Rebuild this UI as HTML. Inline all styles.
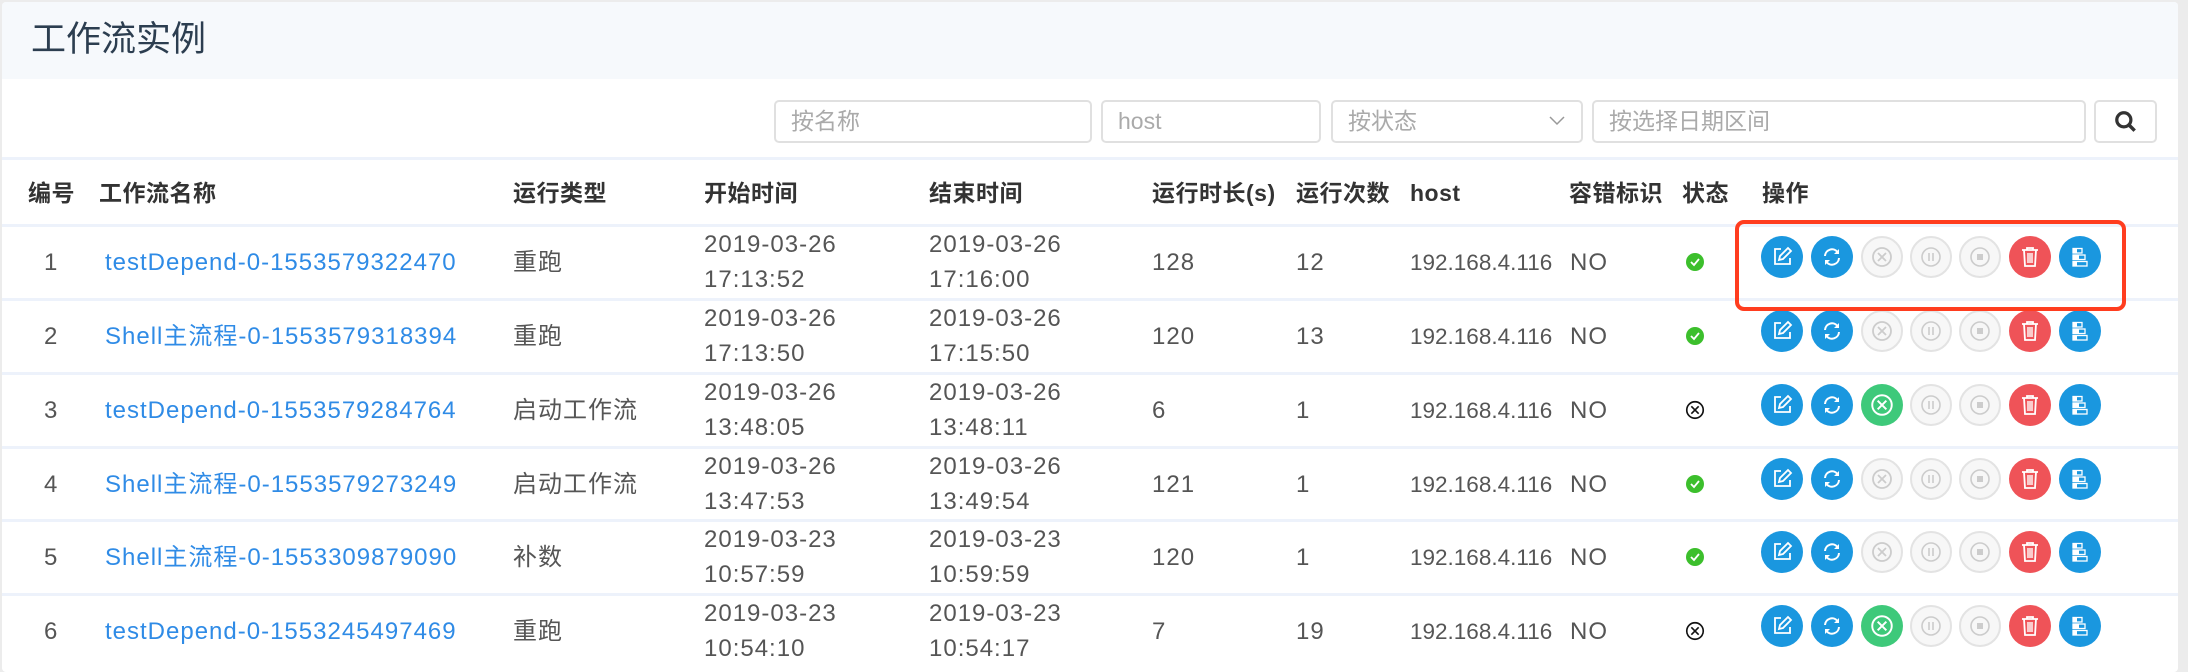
<!DOCTYPE html>
<html><head><meta charset="utf-8">
<style>
*{box-sizing:border-box;margin:0;padding:0}
body{width:2188px;height:662px;background:#ececec;overflow:hidden;font-family:"Liberation Sans","Noto Sans CJK SC",sans-serif;color:#555;font-size:24px;position:relative}
#panel{position:absolute;left:2px;top:2px;width:2176px;height:670px;background:#fff;border-radius:4px;overflow:hidden}
#hd{position:absolute;left:0;top:0;width:100%;height:77px;background:#f6f9fc}
#hd h1{position:absolute;left:29px;top:16px;font-size:35px;font-weight:normal;color:#2c3e50;line-height:44px}
.inp{position:absolute;top:98px;height:43px;border:2px solid #e0e0e0;border-radius:5px;background:#fff;color:#aaa;font-size:23px;line-height:39px;padding-left:15px}
.line{position:absolute;left:0;width:100%;height:3px;background:#edf2fb}
.c{position:absolute;white-space:nowrap;line-height:30px;letter-spacing:1px}
.th{color:#333;font-weight:bold;top:176px;font-size:23px;letter-spacing:0.5px}
.a{color:#2f8be6}
.ip{font-size:22.5px;letter-spacing:0}
.btn{position:absolute;width:42px;height:42px;border-radius:50%;display:flex;align-items:center;justify-content:center}
.b{background:#1a97df}.r{background:#ef5358}.g{background:#3ec97a}
.d{background:#f7f7f7;border:2px solid #e3e3e3}
.s{top:22px}.t1{top:4px}.t2{top:39px}
</style></head><body>
<svg width="0" height="0" style="position:absolute">
<defs>
<symbol id="edit" viewBox="0 0 24 24"><path d="M11 4H5v15h15v-6" fill="none" stroke="#fff" stroke-width="1.8"/><path d="M9 15l1-4 8-8 3 3-8 8z" fill="none" stroke="#fff" stroke-width="1.8"/></symbol>
<symbol id="ref" viewBox="0 0 24 24"><path d="M5 11a7 7 0 0 1 12.5-4M19 13a7 7 0 0 1-12.5 4" fill="none" stroke="#fff" stroke-width="2"/><path d="M19 4v5h-5zM5 20v-5h5z" fill="#fff"/></symbol>
<symbol id="x" viewBox="0 0 24 24"><circle cx="12" cy="12" r="9" fill="none" stroke="currentColor" stroke-width="1.8"/><path d="M8 8l8 8M16 8l-8 8" stroke="currentColor" stroke-width="1.8"/></symbol>
<symbol id="pause" viewBox="0 0 24 24"><circle cx="12" cy="12" r="9" fill="none" stroke="#ccc" stroke-width="1.6"/><path d="M10 8v8M14 8v8" stroke="#ccc" stroke-width="1.6"/></symbol>
<symbol id="stop" viewBox="0 0 24 24"><circle cx="12" cy="12" r="9" fill="none" stroke="#ccc" stroke-width="1.6"/><rect x="9" y="9" width="6" height="6" fill="#ccc"/></symbol>
<symbol id="trash" viewBox="0 0 24 24"><path d="M4 5h16M9 5V3h6v2M6 5l1 16h10l1-16" fill="none" stroke="#fff" stroke-width="1.8"/><path d="M10 8v10M12 8v10M14 8v10" stroke="#fff" stroke-width="1.4"/></symbol>
<symbol id="gantt" viewBox="0 0 24 24"><rect x="5" y="3.5" width="9" height="4.5" fill="none" stroke="#fff" stroke-width="1.3"/><rect x="5" y="10" width="12" height="4.5" fill="none" stroke="#fff" stroke-width="1.3"/><rect x="5" y="16.5" width="14" height="4.5" fill="none" stroke="#fff" stroke-width="1.3"/><rect x="5" y="3.5" width="4" height="4.5" fill="#fff"/><rect x="5" y="10" width="6" height="4.5" fill="#fff"/><rect x="5" y="16.5" width="4" height="4.5" fill="#fff"/></symbol>
<symbol id="ok" viewBox="0 0 20 20"><circle cx="10" cy="10" r="9" fill="#3cbf2c"/><path d="M6 10l3 3 5-6" fill="none" stroke="#fff" stroke-width="1.8"/></symbol>
</defs></svg>
<div id="panel">
<div id="hd"><h1>工作流实例</h1></div>
<div class="inp" style="left:772px;width:318px">按名称</div>
<div class="inp" style="left:1099px;width:220px">host</div>
<div class="inp" style="left:1329px;width:252px">按状态<svg style="position:absolute;right:16px;top:14px" width="16" height="10" viewBox="0 0 16 10"><path d="M1 1l7 7 7-7" fill="none" stroke="#999" stroke-width="1.5"/></svg></div>
<div class="inp" style="left:1590px;width:494px">按选择日期区间</div>
<div class="inp" style="left:2092px;width:63px;padding:0"><svg width="26" height="26" viewBox="0 0 24 24" style="position:absolute;left:17px;top:7px"><circle cx="10" cy="10" r="6.5" fill="none" stroke="#333" stroke-width="3"/><path d="M15 15l5 5" stroke="#333" stroke-width="3.2"/></svg></div>
<div class="line" style="top:155px"></div>
<div class="c th" style="left:26px">编号</div>
<div class="c th" style="left:97px">工作流名称</div>
<div class="c th" style="left:511px">运行类型</div>
<div class="c th" style="left:702px">开始时间</div>
<div class="c th" style="left:927px">结束时间</div>
<div class="c th" style="left:1150px">运行时长(s)</div>
<div class="c th" style="left:1294px">运行次数</div>
<div class="c th" style="left:1408px">host</div>
<div class="c th" style="left:1567px">容错标识</div>
<div class="c th" style="left:1680px">状态</div>
<div class="c th" style="left:1760px">操作</div>

<div class="line" style="top:222px"></div>
<div class="line" style="top:296px"></div>
<div class="line" style="top:370px"></div>
<div class="line" style="top:444px"></div>
<div class="line" style="top:517px"></div>
<div class="line" style="top:591px"></div>

<div style="position:absolute;left:0;top:224px;width:100%;height:74px">
<div class="c s" style="left:42px">1</div>
<div class="c a s" style="left:103px">testDepend-0-1553579322470</div>
<div class="c s" style="left:511px">重跑</div>
<div class="c t1" style="left:702px">2019-03-26</div><div class="c t2" style="left:702px">17:13:52</div>
<div class="c t1" style="left:927px">2019-03-26</div><div class="c t2" style="left:927px">17:16:00</div>
<div class="c s" style="left:1150px">128</div>
<div class="c s" style="left:1294px">12</div>
<div class="c s ip" style="left:1408px">192.168.4.116</div>
<div class="c s" style="left:1568px">NO</div>
<svg class="c" style="left:1683px;top:26px" width="20" height="20"><use href="#ok"/></svg>
</div>

<div style="position:absolute;left:0;top:298px;width:100%;height:74px">
<div class="c s" style="left:42px">2</div>
<div class="c a s" style="left:103px">Shell主流程-0-1553579318394</div>
<div class="c s" style="left:511px">重跑</div>
<div class="c t1" style="left:702px">2019-03-26</div><div class="c t2" style="left:702px">17:13:50</div>
<div class="c t1" style="left:927px">2019-03-26</div><div class="c t2" style="left:927px">17:15:50</div>
<div class="c s" style="left:1150px">120</div>
<div class="c s" style="left:1294px">13</div>
<div class="c s ip" style="left:1408px">192.168.4.116</div>
<div class="c s" style="left:1568px">NO</div>
<svg class="c" style="left:1683px;top:26px" width="20" height="20"><use href="#ok"/></svg>
</div>

<div style="position:absolute;left:0;top:372px;width:100%;height:74px">
<div class="c s" style="left:42px">3</div>
<div class="c a s" style="left:103px">testDepend-0-1553579284764</div>
<div class="c s" style="left:511px">启动工作流</div>
<div class="c t1" style="left:702px">2019-03-26</div><div class="c t2" style="left:702px">13:48:05</div>
<div class="c t1" style="left:927px">2019-03-26</div><div class="c t2" style="left:927px">13:48:11</div>
<div class="c s" style="left:1150px">6</div>
<div class="c s" style="left:1294px">1</div>
<div class="c s ip" style="left:1408px">192.168.4.116</div>
<div class="c s" style="left:1568px">NO</div>
<svg class="c" style="left:1682px;top:25px;color:#111" width="22" height="22"><use href="#x"/></svg>
</div>

<div style="position:absolute;left:0;top:446px;width:100%;height:74px">
<div class="c s" style="left:42px">4</div>
<div class="c a s" style="left:103px">Shell主流程-0-1553579273249</div>
<div class="c s" style="left:511px">启动工作流</div>
<div class="c t1" style="left:702px">2019-03-26</div><div class="c t2" style="left:702px">13:47:53</div>
<div class="c t1" style="left:927px">2019-03-26</div><div class="c t2" style="left:927px">13:49:54</div>
<div class="c s" style="left:1150px">121</div>
<div class="c s" style="left:1294px">1</div>
<div class="c s ip" style="left:1408px">192.168.4.116</div>
<div class="c s" style="left:1568px">NO</div>
<svg class="c" style="left:1683px;top:26px" width="20" height="20"><use href="#ok"/></svg>
</div>

<div style="position:absolute;left:0;top:519px;width:100%;height:74px">
<div class="c s" style="left:42px">5</div>
<div class="c a s" style="left:103px">Shell主流程-0-1553309879090</div>
<div class="c s" style="left:511px">补数</div>
<div class="c t1" style="left:702px">2019-03-23</div><div class="c t2" style="left:702px">10:57:59</div>
<div class="c t1" style="left:927px">2019-03-23</div><div class="c t2" style="left:927px">10:59:59</div>
<div class="c s" style="left:1150px">120</div>
<div class="c s" style="left:1294px">1</div>
<div class="c s ip" style="left:1408px">192.168.4.116</div>
<div class="c s" style="left:1568px">NO</div>
<svg class="c" style="left:1683px;top:26px" width="20" height="20"><use href="#ok"/></svg>
</div>

<div style="position:absolute;left:0;top:593px;width:100%;height:74px">
<div class="c s" style="left:42px">6</div>
<div class="c a s" style="left:103px">testDepend-0-1553245497469</div>
<div class="c s" style="left:511px">重跑</div>
<div class="c t1" style="left:702px">2019-03-23</div><div class="c t2" style="left:702px">10:54:10</div>
<div class="c t1" style="left:927px">2019-03-23</div><div class="c t2" style="left:927px">10:54:17</div>
<div class="c s" style="left:1150px">7</div>
<div class="c s" style="left:1294px">19</div>
<div class="c s ip" style="left:1408px">192.168.4.116</div>
<div class="c s" style="left:1568px">NO</div>
<svg class="c" style="left:1682px;top:25px;color:#111" width="22" height="22"><use href="#x"/></svg>
</div>
</div>

<div style="position:absolute;left:1761px;top:236px">
<div class="btn b" style="left:0;top:0"><svg width="24" height="24"><use href="#edit"/></svg></div>
<div class="btn b" style="left:50px;top:0"><svg width="24" height="24"><use href="#ref"/></svg></div>
<div class="btn d" style="left:100px;top:0;color:#ccc"><svg width="24" height="24"><use href="#x"/></svg></div>
<div class="btn d" style="left:149px;top:0"><svg width="24" height="24"><use href="#pause"/></svg></div>
<div class="btn d" style="left:198px;top:0"><svg width="24" height="24"><use href="#stop"/></svg></div>
<div class="btn r" style="left:248px;top:0"><svg width="24" height="24"><use href="#trash"/></svg></div>
<div class="btn b" style="left:298px;top:0"><svg width="24" height="24"><use href="#gantt"/></svg></div>
</div>
<div style="position:absolute;left:1761px;top:310px">
<div class="btn b" style="left:0;top:0"><svg width="24" height="24"><use href="#edit"/></svg></div>
<div class="btn b" style="left:50px;top:0"><svg width="24" height="24"><use href="#ref"/></svg></div>
<div class="btn d" style="left:100px;top:0;color:#ccc"><svg width="24" height="24"><use href="#x"/></svg></div>
<div class="btn d" style="left:149px;top:0"><svg width="24" height="24"><use href="#pause"/></svg></div>
<div class="btn d" style="left:198px;top:0"><svg width="24" height="24"><use href="#stop"/></svg></div>
<div class="btn r" style="left:248px;top:0"><svg width="24" height="24"><use href="#trash"/></svg></div>
<div class="btn b" style="left:298px;top:0"><svg width="24" height="24"><use href="#gantt"/></svg></div>
</div>
<div style="position:absolute;left:1761px;top:384px">
<div class="btn b" style="left:0;top:0"><svg width="24" height="24"><use href="#edit"/></svg></div>
<div class="btn b" style="left:50px;top:0"><svg width="24" height="24"><use href="#ref"/></svg></div>
<div class="btn g" style="left:100px;top:0;color:#fff"><svg width="26" height="26"><use href="#x"/></svg></div>
<div class="btn d" style="left:149px;top:0"><svg width="24" height="24"><use href="#pause"/></svg></div>
<div class="btn d" style="left:198px;top:0"><svg width="24" height="24"><use href="#stop"/></svg></div>
<div class="btn r" style="left:248px;top:0"><svg width="24" height="24"><use href="#trash"/></svg></div>
<div class="btn b" style="left:298px;top:0"><svg width="24" height="24"><use href="#gantt"/></svg></div>
</div>
<div style="position:absolute;left:1761px;top:458px">
<div class="btn b" style="left:0;top:0"><svg width="24" height="24"><use href="#edit"/></svg></div>
<div class="btn b" style="left:50px;top:0"><svg width="24" height="24"><use href="#ref"/></svg></div>
<div class="btn d" style="left:100px;top:0;color:#ccc"><svg width="24" height="24"><use href="#x"/></svg></div>
<div class="btn d" style="left:149px;top:0"><svg width="24" height="24"><use href="#pause"/></svg></div>
<div class="btn d" style="left:198px;top:0"><svg width="24" height="24"><use href="#stop"/></svg></div>
<div class="btn r" style="left:248px;top:0"><svg width="24" height="24"><use href="#trash"/></svg></div>
<div class="btn b" style="left:298px;top:0"><svg width="24" height="24"><use href="#gantt"/></svg></div>
</div>
<div style="position:absolute;left:1761px;top:531px">
<div class="btn b" style="left:0;top:0"><svg width="24" height="24"><use href="#edit"/></svg></div>
<div class="btn b" style="left:50px;top:0"><svg width="24" height="24"><use href="#ref"/></svg></div>
<div class="btn d" style="left:100px;top:0;color:#ccc"><svg width="24" height="24"><use href="#x"/></svg></div>
<div class="btn d" style="left:149px;top:0"><svg width="24" height="24"><use href="#pause"/></svg></div>
<div class="btn d" style="left:198px;top:0"><svg width="24" height="24"><use href="#stop"/></svg></div>
<div class="btn r" style="left:248px;top:0"><svg width="24" height="24"><use href="#trash"/></svg></div>
<div class="btn b" style="left:298px;top:0"><svg width="24" height="24"><use href="#gantt"/></svg></div>
</div>
<div style="position:absolute;left:1761px;top:605px">
<div class="btn b" style="left:0;top:0"><svg width="24" height="24"><use href="#edit"/></svg></div>
<div class="btn b" style="left:50px;top:0"><svg width="24" height="24"><use href="#ref"/></svg></div>
<div class="btn g" style="left:100px;top:0;color:#fff"><svg width="26" height="26"><use href="#x"/></svg></div>
<div class="btn d" style="left:149px;top:0"><svg width="24" height="24"><use href="#pause"/></svg></div>
<div class="btn d" style="left:198px;top:0"><svg width="24" height="24"><use href="#stop"/></svg></div>
<div class="btn r" style="left:248px;top:0"><svg width="24" height="24"><use href="#trash"/></svg></div>
<div class="btn b" style="left:298px;top:0"><svg width="24" height="24"><use href="#gantt"/></svg></div>
</div>

<div style="position:absolute;left:1735px;top:220px;width:391px;height:91px;border:4px solid #ff3d1f;border-radius:9px"></div>
</body></html>
